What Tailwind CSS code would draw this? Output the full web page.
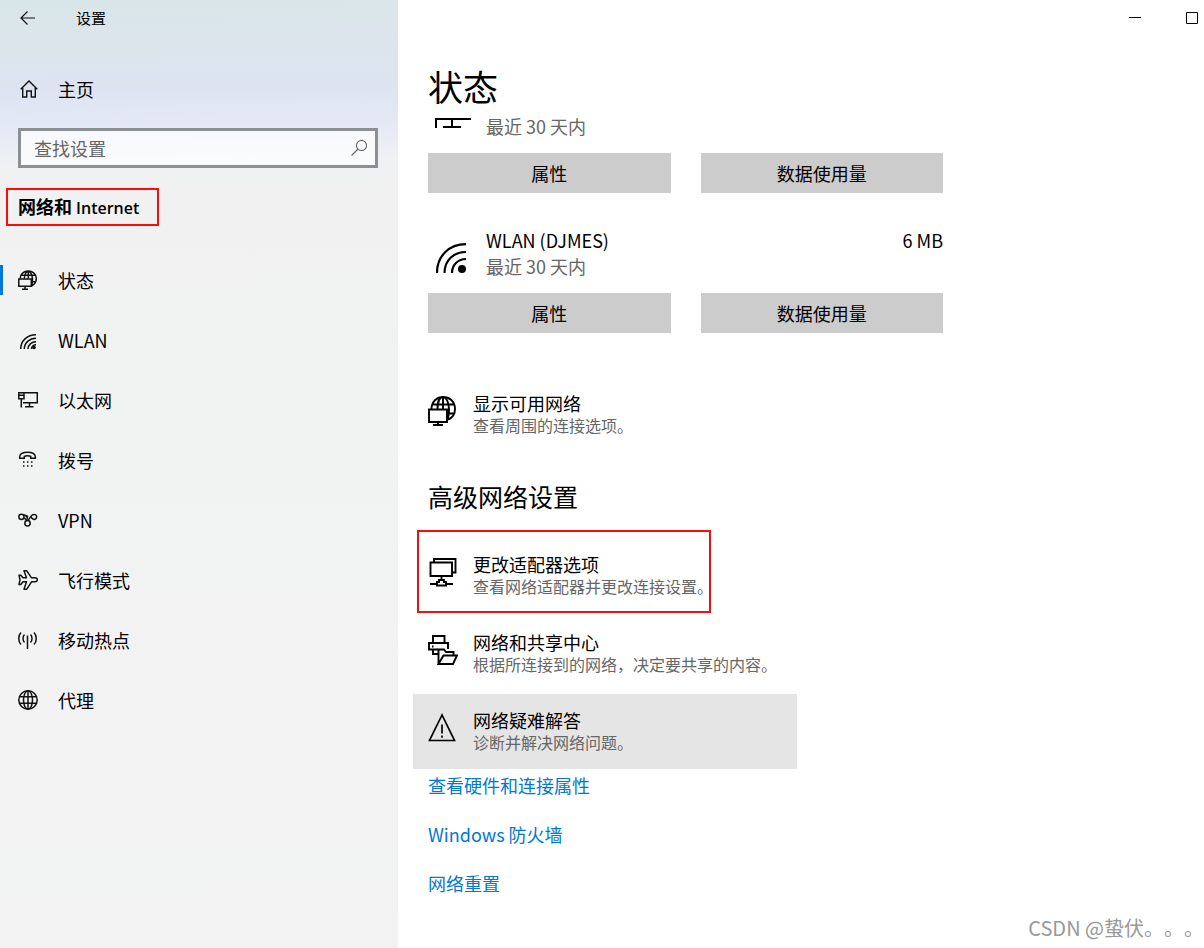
<!DOCTYPE html>
<html lang="zh-CN">
  <head>
    <meta charset="UTF-8" />
    <meta name="viewport" content="width=device-width, initial-scale=1.0" />
    <title>设置</title>
    <script src="https://cdn.jsdelivr.net/npm/@tailwindcss/browser@4"></script>
  </head>
  <body class="bg-white text-black font-['Noto_Sans_CJK_SC',sans-serif] [text-spacing-trim:space-all]">
    <div class="flex min-h-screen">
      <!-- sidebar -->
      <aside
        class="w-[398px] shrink-0 bg-[#f2f2f2] bg-linear-[179deg,#d9e6e9_0px,#dce5ec_50px,#dde4f1_90px,#e3e8f4_125px,#eff1f4_165px,#f1f1f1_190px,#f1f2f2_300px,#f3f3f3_100%]"
      >
        <header class="flex h-9 items-center pl-5">
          <button aria-label="返回">
            <svg class="size-4" viewBox="0 0 16 16" fill="none" stroke="#111" stroke-width="1.2">
              <path d="M15 8H1M7.5 1.5 1 8l6.5 6.5" />
            </svg>
          </button>
          <h1 class="pl-10 text-[15px] leading-6">设置</h1>
        </header>

        <a href="#" class="mt-[23px] flex h-15 items-center gap-5 pl-5">
          <svg class="size-[18px]" viewBox="0 0 18 18" fill="none" stroke="#111" stroke-width="1.4">
            <path d="M.7 9.200 9 1l8.300 8.200M2.700 7.500V17h4v-6h4.600v6h4V7.500" />
          </svg>
          <span class="text-lg leading-6">主页</span>
        </a>

        <div class="mr-5 ml-[18px] mt-[9px] flex h-10 items-center border-3 border-[#8d9093] bg-white/70 pr-2 pl-[13px]">
          <input
            type="text"
            aria-label="查找设置"
            placeholder="查找设置"
            class="min-w-0 flex-1 text-lg leading-6 outline-none placeholder:text-[#666]"
          />
          <svg class="size-4" viewBox="0 0 16 16" fill="none" stroke="#666" stroke-width="1.1">
            <circle cx="10.500" cy="5.500" r="5" />
            <path d="M7 9 .5 15.500" />
          </svg>
        </div>

        <div class="mt-5 ml-[6px] w-[153px] border-2 border-[#fb0b0b] pt-1 pb-1 pl-[10px]">
          <h2 class="text-lg leading-6 font-bold whitespace-nowrap">
            网络和 <span class="font-['Open_Sans'] text-base font-semibold">Internet</span>
          </h2>
        </div>

        <nav class="mt-6 text-lg leading-6">
          <a href="#" class="relative flex h-15 items-center gap-5 pl-[18px]">
            <span class="absolute top-[15px] left-0 h-[30px] w-[3px] bg-[#0078d7]"></span>
            <svg class="size-5" viewBox="0 0 20 20" fill="none" stroke="#111" stroke-width="1.500">
              <path d="M2.200 8.500C2.500-1.500 18-1.500 18.300 8.500c0 3.500-2 6-4.500 7.200M3.500 5.200h14M13.500 11.800h4.200M6.300 8.500C6.500 4 8.500 1.200 10.300 1.200s4.200 3.800 4.200 7.800c0 3-.4 5-1 6.500M10.300 1v7.500" />
              <path d="M.8 9h12.500v7.300H.8zM7 16.300v3M4 19.200h6" />
            </svg>
            <span>状态</span>
          </a>
          <a href="#" class="flex h-15 items-center gap-5 pl-[18px]">
            <svg class="size-5" viewBox="0 0 20 20" fill="none" stroke="#111" stroke-width="1.500">
              <path d="M2.700 19C2.700 11 9 4.700 18 4.700M6.300 19c0-6 5-10.800 11.700-10.800M10 19c0-4 3.500-7.300 8-7.300M13.500 19c0-2.500 2-4.200 4.500-4.200" />
              <circle cx="16" cy="17.500" r="1.800" fill="#111" stroke="none" />
            </svg>
            <span>WLAN</span>
          </a>
          <a href="#" class="flex h-15 items-center gap-5 pl-[18px]">
            <svg class="size-5" viewBox="0 0 20 20" fill="none" stroke="#111" stroke-width="1.500">
              <path d="M6 2.700h13.300v10H5M.8 2.700H6v6H.8zM.8 5.200H6M3.300 8.700V17.500M11.500 12.700v4M7 16.700h8.500" />
            </svg>
            <span>以太网</span>
          </a>
          <a href="#" class="flex h-15 items-center gap-5 pl-[18px]">
            <svg class="size-5" viewBox="0 0 20 20" fill="none" stroke="#111" stroke-width="1.500">
              <path d="M1.700 6.500C2 3.500 6 2.200 9.500 2.200s7.500 1.300 7.800 4.300v1.700h-4.600V6.300c-1.500-.8-5-.8-6.400 0v1.900H1.700z" />
              <path d="M5 12h1.500M9 12h1.500M13 12h1.500M5 16h1.500M9 16h1.500M13 16h1.500" />
            </svg>
            <span>拨号</span>
          </a>
          <a href="#" class="flex h-15 items-center gap-5 pl-[18px]">
            <svg class="size-5" viewBox="0 0 20 20" fill="none" stroke="#111" stroke-width="1.500">
              <circle cx="3.400" cy="6.800" r="2.600" />
              <circle cx="9.500" cy="13.200" r="2.700" />
              <path d="M5.500 5.200c1.500-1 3 1.200 4.700 1.200M6 7.800l3 2.700c2-.2 3-3.500 5-5.200 2-1.700 4.700-.5 4.700 1.500 0 2.400-3 3.600-4.700 1.500L12.500 6M7.500 6.500h2l-.5 2.500" />
            </svg>
            <span>VPN</span>
          </a>
          <a href="#" class="flex h-15 items-center gap-5 pl-[18px]">
            <svg class="size-5" viewBox="0 0 20 20" fill="none" stroke="#111" stroke-width="1.500" stroke-linejoin="round">
              <path d="M1 5.200h1.800L5 7.800h3.500L6 .8h2.800l4.700 7H17c3 0 3 4 0 4h-3.500l-4.700 7.400H6l2.500-7.400H5l-2.200 2.600H1l1-4.600z" />
            </svg>
            <span>飞行模式</span>
          </a>
          <a href="#" class="flex h-15 items-center gap-5 pl-[18px]">
            <svg class="size-5" viewBox="0 0 20 20" fill="none" stroke="#111" stroke-width="1.500">
              <path d="M9.500 5.500V19M6.500 4.500c-2 2-2 6 0 8M12.500 4.500c2 2 2 6 0 8M3 2.500c-3 3-3 9 0 12M16 2.500c3 3 3 9 0 12" />
            </svg>
            <span>移动热点</span>
          </a>
          <a href="#" class="flex h-15 items-center gap-5 pl-[18px]">
            <svg class="size-5" viewBox="0 0 20 20" fill="none" stroke="#111" stroke-width="1.500">
              <circle cx="10" cy="10" r="9.200" />
              <ellipse cx="10" cy="10" rx="4.500" ry="9.200" />
              <path d="M10 1v18M1.500 6.800h17M1.500 13.200h17" />
            </svg>
            <span>代理</span>
          </a>
        </nav>
      </aside>

      <!-- content -->
      <main class="relative min-w-0 flex-1 pl-[30px]">
        <div class="flex h-9 items-center justify-end gap-[33px]">
          <button aria-label="最小化" class="grid size-6 place-items-center">
            <svg class="size-3" viewBox="0 0 12 12" stroke="#000"><path d="M0 5.500h12" /></svg>
          </button>
          <button aria-label="最大化" class="grid size-6 place-items-center">
            <svg class="size-3" viewBox="0 0 12 12" fill="none" stroke="#000"><path d="M.5.5h11v11H.5z" /></svg>
          </button>
        </div>

        <h1 class="mt-[26px] h-[52px] text-[35px] leading-12">状态</h1>

        <div class="max-w-[515px] text-lg">
          <!-- first connection, scrolled partly under the heading -->
          <div class="flex h-[39px] items-start gap-[15px] pl-[7px]">
            <svg class="mt-1 h-3 w-9" viewBox="0 0 36 12" fill="none" stroke="#000" stroke-width="2">
              <path d="M1 10V1h35M17 1v8M8 9h18" />
            </svg>
            <p class="leading-6 text-[#666]">最近 30 天内</p>
          </div>
          <div class="grid grid-cols-2 gap-[30px]">
            <button class="h-10 bg-[#ccc]">属性</button>
            <button class="h-10 bg-[#ccc]">数据使用量</button>
          </div>

          <div class="mt-[34px] flex h-[66px] items-start pl-[8px]">
            <svg class="mt-4 mr-5 size-[30px]" viewBox="0 0 30 30" fill="none" stroke="#000" stroke-width="2.200">
              <path d="M1 30C1 13 13 1.200 30 1.200M8.500 30C8.500 17.500 17.500 9 30 9M16 30c0-8 6-14 14-14" />
              <circle cx="26" cy="26" r="4" fill="#000" stroke="none" />
            </svg>
            <div class="flex-1 leading-[26px]">
              <p>WLAN (DJMES)</p>
              <p class="text-[#666]">最近 30 天内</p>
            </div>
            <p class="leading-[26px]">6 MB</p>
          </div>
          <div class="grid grid-cols-2 gap-[30px]">
            <button class="h-10 bg-[#ccc]">属性</button>
            <button class="h-10 bg-[#ccc]">数据使用量</button>
          </div>
        </div>

        <a href="#" class="mt-11 -ml-[15px] flex h-[75px] max-w-[384px] gap-[15px] pt-[15px] pl-[15px]">
          <svg class="mt-1 size-[30px] shrink-0" viewBox="0 0 30 30" fill="none" stroke="#000" stroke-width="1.900">
            <path d="M3.500 13C3.500-3 27-3 27 13c0 5-3 9-7 10.500M4.500 8.500h21.500M20 17.500h6M9.500 13C9.500 5 12 1 15 1s6 5 6 12c0 4-.5 8-1.500 10M15 1v12" />
            <path d="M1 13.500h18V26H1zM10 26v3.500M5 29h10" />
          </svg>
          <div class="whitespace-nowrap">
            <p class="text-lg leading-[22px]">显示可用网络</p>
            <p class="text-base leading-[22px] text-[#666]">查看周围的连接选项。</p>
          </div>
        </a>

        <h2 class="mt-[26px] text-[25px] leading-9">高级网络设置</h2>

        <div class="mt-6 -ml-[15px] flex max-w-[384px] flex-col gap-[3px] whitespace-nowrap">
          <a href="#" class="relative flex h-[75px] gap-[15px] pt-[15px] pl-[15px]">
            <span class="absolute -top-2 left-1 h-[83px] w-[294px] border-2 border-[#fb0b0b]"></span>
            <svg class="mt-1 size-[30px] shrink-0" viewBox="0 0 30 30" fill="none" stroke="#000" stroke-width="1.900">
              <path d="M6 5V2h21.500v13.500H24" />
              <path d="M2.500 5.500H24V19H2.500zM13.500 19v4M2 27h7M18 27h7M9 28.500V25h2v-2h5v2h2v3.500z" />
            </svg>
            <div>
              <p class="text-lg leading-[22px]">更改适配器选项</p>
              <p class="text-base leading-[22px] text-[#666]">查看网络适配器并更改连接设置。</p>
            </div>
          </a>
          <a href="#" class="flex h-[75px] gap-[15px] pt-[15px] pl-[15px]">
            <svg class="mt-1 size-[30px] shrink-0" viewBox="0 0 30 30" fill="none" stroke="#000" stroke-width="1.900">
              <path d="M5 8V1h11.500v7M10 19H5v-4.500M10 14.500H1V8h19v6M4 11.500h1.500" />
              <path d="M10.500 29V14.500h5.500l2 2.500h7.500v3.500M10.500 29l5-8.500H29L25 29z" />
            </svg>
            <div>
              <p class="text-lg leading-[22px]">网络和共享中心</p>
              <p class="text-base leading-[22px] text-[#666]">根据所连接到的网络，决定要共享的内容。</p>
            </div>
          </a>
          <a href="#" class="flex h-[75px] gap-[15px] bg-[#e5e5e5] pt-[15px] pl-[15px]">
            <svg class="mt-1 size-[30px] shrink-0" viewBox="0 0 30 30" fill="none" stroke="#000" stroke-width="1.700">
              <path d="M14 2 1.500 27.500h25zM14 11.500v9M14 22.500v2.300" />
            </svg>
            <div>
              <p class="text-lg leading-[22px]">网络疑难解答</p>
              <p class="text-base leading-[22px] text-[#666]">诊断并解决网络问题。</p>
            </div>
          </a>
        </div>

        <div class="mt-1 flex flex-col items-start gap-[25px] text-lg leading-6 text-[#0078d7]">
          <a href="#">查看硬件和连接属性</a>
          <a href="#">Windows 防火墙</a>
          <a href="#">网络重置</a>
        </div>

        <p class="absolute right-0 bottom-1 text-xl leading-8 text-[#999]">CSDN @蛰伏。。。</p>
      </main>
    </div>
  </body>
</html>
